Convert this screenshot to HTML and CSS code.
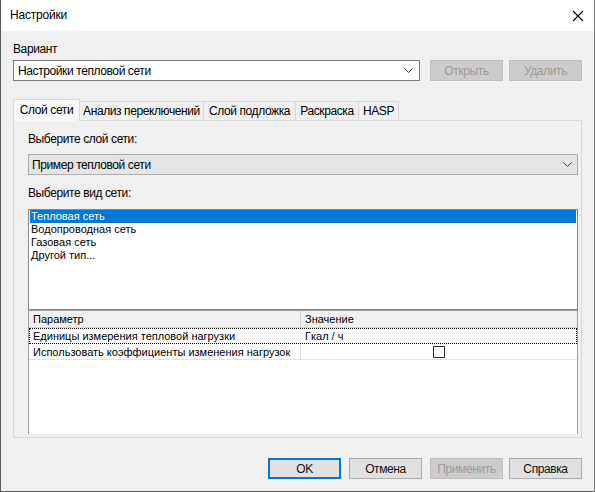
FILE: index.html
```html
<!DOCTYPE html>
<html lang="ru">
<head>
<meta charset="utf-8">
<title>Настройки</title>
<link rel="stylesheet" href="styles.css">
</head>
<body>
<div class="window">
  <div class="titlebar">
    <span class="title">Настройки</span>
    <svg class="close" width="12" height="12" viewBox="0 0 12 12"><path d="M1 1L11 11M11 1L1 11" stroke="#000" stroke-width="1.1" fill="none"/></svg>
  </div>
  <div class="main">
    <div class="label top-label">Вариант</div>
    <div class="variant-row">
      <div class="combo combo-white">
        <span>Настройки тепловой сети</span>
        <svg class="chev" width="9" height="5" viewBox="0 0 9 5"><path d="M0.5 0.5L4.5 4.5L8.5 0.5" stroke="#444" fill="none"/></svg>
      </div>
      <div class="btn disabled btn-first">Открыть</div>
      <div class="btn disabled btn-last">Удалить</div>
    </div>
    <div class="tabs">
      <div class="tab active t1">Слой сети</div>
      <div class="tab t2">Анализ переключений</div>
      <div class="tab t3">Слой подложка</div>
      <div class="tab t4">Раскраска</div>
      <div class="tab t5">HASP</div>
    </div>
    <div class="panel">
      <div class="label panel-label1">Выберите слой сети:</div>
      <div class="combo combo-gray">
        <span>Пример тепловой сети</span>
        <svg class="chev" width="9" height="5" viewBox="0 0 9 5"><path d="M0.5 0.5L4.5 4.5L8.5 0.5" stroke="#444" fill="none"/></svg>
      </div>
      <div class="label panel-label2">Выберите вид сети:</div>
      <div class="listbox">
        <div class="item selected">Тепловая сеть</div>
        <div class="item">Водопроводная сеть</div>
        <div class="item">Газовая сеть</div>
        <div class="item">Другой тип...</div>
      </div>
      <div class="grid">
        <div class="grow head">
          <div class="cell c1">Параметр</div>
          <div class="cell c2">Значение</div>
        </div>
        <div class="grow focus">
          <div class="cell c1">Единицы измерения тепловой нагрузки</div>
          <div class="cell c2">Гкал / ч</div>
        </div>
        <div class="grow">
          <div class="cell c1">Использовать коэффициенты изменения нагрузок</div>
          <div class="cell c2 center"><span class="check"></span></div>
        </div>
      </div>
    </div>
    <div class="footer">
      <div class="btn default">OK</div>
      <div class="btn">Отмена</div>
      <div class="btn disabled btn-first">Применить</div>
      <div class="btn btn-last">Справка</div>
    </div>
  </div>
</div>
</body>
</html>
```
FILE: styles.css
```css
* { box-sizing: border-box; }
html, body { margin: 0; padding: 0; background: #f0f0f0; }
body { font-family: "Liberation Sans", Arial, sans-serif; font-size: 12px; color: #000; }

.window {
  width: 595px;
  height: 492px;
  background: #f0f0f0;
  border-left: 1px solid #5c5c5c;
  border-right: 1px solid #7a7a7a;
  border-bottom: 1px solid #5c5c5c;
  display: flex;
  flex-direction: column;
  letter-spacing: -0.4px;
}

.titlebar {
  height: 31px;
  background: #fff;
  display: flex;
  align-items: center;
  justify-content: space-between;
  padding: 0 10px 0 9px;
  flex-shrink: 0;
}
.title { font-size: 12px; line-height: 15px; letter-spacing: -0.2px; }
.close { display: block; }

.main { padding: 0 12px; display: flex; flex-direction: column; }

.label { line-height: 15px; height: 15px; white-space: nowrap; }
.top-label { margin-top: 11px; }

.variant-row { display: flex; margin-top: 3px; height: 21px; }

.combo {
  height: 21px;
  display: flex;
  align-items: center;
  justify-content: space-between;
  padding: 0 6px 0 4px;
  white-space: nowrap;
}
.combo-white { flex: 1; background: #fff; border: 1px solid #7a7a7a; }
.combo-gray { margin-top: 7px; background: #e5e5e5; border: 1px solid #adadad; padding-left: 3px; padding-right: 5px; }
.chev { display: block; }

.btn {
  width: 73px;
  height: 21px;
  background: #e1e1e1;
  border: 1px solid #adadad;
  display: flex;
  align-items: center;
  justify-content: center;
  margin-left: 8px;
  flex-shrink: 0;
  color: #111;
}
.btn.disabled { background: #cccccc; border-color: #bfbfbf; color: #9b9b9b; }
.btn.default { border: 2px solid #0078d7; margin-left: 0; }
.variant-row .btn-first { margin-left: 10px; }
.btn-last { margin-left: 6px; }

.tabs {
  display: flex;
  align-items: flex-end;
  height: 22px;
  margin-top: 18px;
  margin-bottom: -1px;
  position: relative;
  z-index: 1;
}
.tab {
  height: 19px;
  margin-bottom: 1px;
  border: 1px solid #d9d9d9;
  border-bottom: none;
  background: #f0f0f0;
  display: flex;
  align-items: center;
  justify-content: center;
  white-space: nowrap;
  margin-left: -1px;
}
.tab.active { height: 22px; margin-bottom: 0; background: #f9f9f9; margin-left: 0; padding-bottom: 2px; }
.t1 { width: 67px; }
.t2 { width: 125px; }
.t3 { width: 93px; }
.t4 { width: 64px; }
.t5 { width: 41px; }

.panel {
  height: 318px;
  border: 1px solid #d9d9d9;
  background: #f0f0f0;
  padding: 11px 3px 0 14px;
  display: flex;
  flex-direction: column;
}
.panel-label2 { margin-top: 11px; }

.listbox {
  margin-top: 8px;
  height: 101px;
  background: #fff;
  border: 1px solid #828790;
  padding: 0 1px;
  font-size: 11px;
  letter-spacing: 0;
}
.item { height: 13px; line-height: 13px; padding-left: 1px; white-space: nowrap; }
.item.selected { background: #0078d7; color: #fff; }

.grid {
  height: 124px;
  background: #fff;
  border: 1px solid #a0a0a0;
  border-bottom: none;
  font-size: 11px;
  letter-spacing: 0;
}
.grow { display: flex; height: 16px; border-bottom: 1px solid #e3e3e3; }
.grow.head { height: 17px; background: #f0f0f0; border-bottom: 1px solid #d5d5d5; }
.grow.focus { border: 1px dotted #000; }
.cell { display: flex; align-items: center; white-space: nowrap; padding-left: 4px; overflow: hidden; }
.c1 { width: 272px; border-right: 1px solid #e3e3e3; }
.head .c1 { border-right-color: #d0d0d0; }
.focus .c1 { width: 271px; padding-left: 3px; border-right-color: transparent; }
.c2 { flex: 1; }
.center { justify-content: center; padding-left: 0; }
.check { width: 12px; height: 12px; border: 1px solid #333; background: #fff; display: block; }

.footer {
  display: flex;
  justify-content: flex-end;
  margin-top: 20px;
}
```
